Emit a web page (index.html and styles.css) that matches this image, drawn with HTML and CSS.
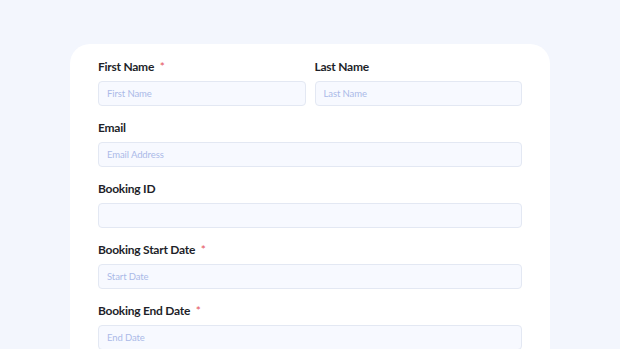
FILE: index.html
```html
<!DOCTYPE html>
<html>
<head>
<meta charset="utf-8">
<link rel="stylesheet" href="styles.css">
</head>
<body>
<div class="card">
  <div class="row">
    <div class="field">
      <label class="label">First Name <span class="req">*</span></label>
      <div class="input placeholder">First Name</div>
    </div>
    <div class="field">
      <label class="label">Last Name</label>
      <div class="input placeholder">Last Name</div>
    </div>
  </div>
  <div class="field">
    <label class="label">Email</label>
    <div class="input placeholder">Email Address</div>
  </div>
  <div class="field">
    <label class="label">Booking ID</label>
    <div class="input placeholder"></div>
  </div>
  <div class="field">
    <label class="label">Booking Start Date <span class="req">*</span></label>
    <div class="input placeholder">Start Date</div>
  </div>
  <div class="field">
    <label class="label">Booking End Date <span class="req">*</span></label>
    <div class="input placeholder">End Date</div>
  </div>
</div>
</body>
</html>
```
FILE: styles.css
```css
html, body {
  margin: 0;
  padding: 0;
  background: #f3f6fd;
  font-family: "Lato", "Inter", sans-serif;
  overflow: hidden;
}
.card {
  margin: 44px 0 0 70px;
  width: 480px;
  box-sizing: border-box;
  padding: 15px 28px 40px;
  background: #ffffff;
  border-radius: 20px;
  display: flex;
  flex-direction: column;
  gap: 14px;
}
.row {
  display: flex;
  gap: 9px;
}
.row .field {
  flex: 1;
}
.field {
  display: flex;
  flex-direction: column;
  gap: 6px;
}
.label {
  font-size: 12px;
  line-height: 16px;
  font-weight: 700;
  color: #1e1f2a;
  letter-spacing: -0.25px;
}
.req {
  color: #e5535c;
  margin-left: 3px;
  font-weight: 400;
}
.input {
  height: 25px;
  box-sizing: border-box;
  border: 1px solid #e3e8f3;
  border-radius: 4px;
  background: #f7f9ff;
  padding: 0 8px;
  display: flex;
  align-items: center;
  font-size: 9.5px;
  letter-spacing: -0.1px;
  color: #abb9e8;
}
```
